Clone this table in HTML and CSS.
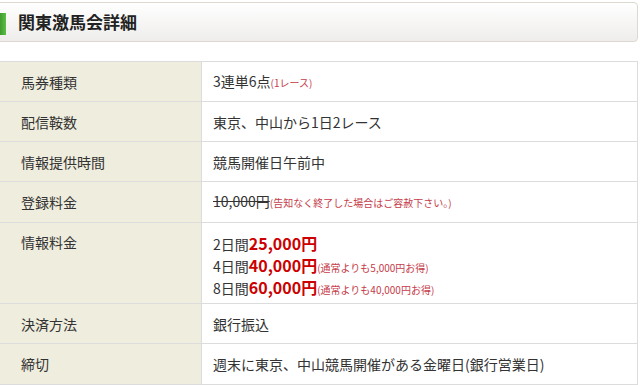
FILE: index.html
```html
<!DOCTYPE html>
<html lang="ja">
<head>
<meta charset="utf-8">
<link rel="stylesheet" href="styles.css">
</head>
<body>
<div class="page">
  <h2 class="heading"><span class="mark"></span>関東激馬会詳細</h2>
  <table class="detail">
    <tr><th>馬券種類</th><td>3連単6点<span class="note">(1レース)</span></td></tr>
    <tr><th>配信鞍数</th><td>東京、中山から1日2レース</td></tr>
    <tr><th>情報提供時間</th><td>競馬開催日午前中</td></tr>
    <tr class="wide"><th>登録料金</th><td><s>10,000円</s><span class="note">(告知なく終了した場合はご容赦下さい。)</span></td></tr>
    <tr class="tall"><th>情報料金</th><td class="prices">
      <div>2日間<strong>25,000円</strong></div>
      <div>4日間<strong>40,000円</strong><span class="note">(通常よりも5,000円お得)</span></div>
      <div>8日間<strong>60,000円</strong><span class="note">(通常よりも40,000円お得)</span></div>
    </td></tr>
    <tr><th>決済方法</th><td>銀行振込</td></tr>
    <tr class="wide"><th>締切</th><td>週末に東京、中山競馬開催がある金曜日(銀行営業日)</td></tr>
  </table>
</div>
</body>
</html>
```
FILE: styles.css
```css
html, body {
  margin: 0;
  padding: 0;
  background: #fff;
}
body {
  font-family: "Noto Sans CJK JP", "Liberation Sans", sans-serif;
  color: #333;
  overflow: hidden;
}
.page {
  margin: 0 2px 0 -4px;
  padding-top: 2px;
}
.heading {
  position: relative;
  margin: 0 0 19px 0;
  height: 38px;
  border: 1px solid #ddd8d0;
  border-radius: 4px;
  background: linear-gradient(#ffffff, #eeedeb);
  font-size: 17px;
  font-weight: bold;
  line-height: 38px;
  padding-left: 21px;
  color: #222;
}
.mark {
  position: absolute;
  left: 3px;
  top: 10px;
  width: 6px;
  height: 22px;
  background: linear-gradient(90deg, #3f9b2e, #5cbf45);
}
.detail {
  margin-left: 3px;
  width: 639px;
  border-collapse: collapse;
  font-size: 14px;
  table-layout: fixed;
}
.detail tr {
  height: 40px;
}
.detail tr.wide {
  height: 41px;
}
.detail tr.tall {
  height: 81px;
}
.detail th, .detail td {
  border: 1px solid #dcdcdc;
  text-align: left;
  vertical-align: middle;
  padding: 0 10px;
  line-height: 20px;
  font-weight: normal;
  overflow: hidden;
  white-space: nowrap;
}
.detail th {
  width: 170px;
  padding-left: 22px;
  background: #efeddd;
  border-left: none;
  color: #333;
}
.detail td {
  padding-left: 11px;
  background: #fff;
}
.detail tr.tall th,
.detail tr.tall td {
  vertical-align: top;
  padding-top: 9px;
}
.prices div {
  height: 22px;
  line-height: 22px;
}
.prices strong {
  color: #cc0000;
  font-size: 16px;
  font-weight: bold;
}
.note {
  color: #c53c4a;
  font-size: 10px;
}
s {
  color: #333;
}
```
